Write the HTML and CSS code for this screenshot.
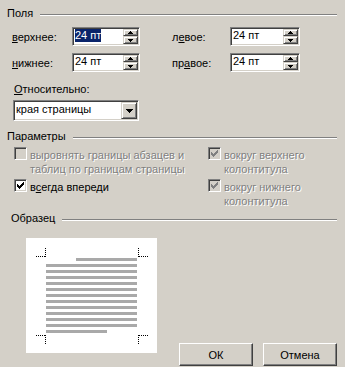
FILE: index.html
```html
<!DOCTYPE html>
<html lang="ru">
<head>
<meta charset="utf-8">
<title>Поля</title>
<link rel="stylesheet" href="styles.css">
</head>
<body>
<div class="dlg">
  <div class="head"><span class="head-t">Поля</span><span class="rule"></span></div>

  <div class="margins">
    <span class="lbl"><u>в</u>ерхнее:</span>
    <div class="spin sunken">
      <span class="val"><span class="sel">24 пт</span></span>
      <span class="spin-btns">
        <span class="sb up raised"><svg width="5" height="3" viewBox="0 0 5 3" shape-rendering="crispEdges"><path d="M2 0h1v1h-1z M1 1h3v1h-3z M0 2h5v1h-5z" fill="#000"/></svg></span>
        <span class="sb dn raised"><svg width="5" height="3" viewBox="0 0 5 3" shape-rendering="crispEdges"><path d="M0 0h5v1h-5z M1 1h3v1h-3z M2 2h1v1h-1z" fill="#000"/></svg></span>
      </span>
    </div>
    <span class="lbl lbl-r">л<u>е</u>вое:</span>
    <div class="spin sunken">
      <span class="val">24 пт</span>
      <span class="spin-btns">
        <span class="sb up raised"><svg width="5" height="3" viewBox="0 0 5 3" shape-rendering="crispEdges"><path d="M2 0h1v1h-1z M1 1h3v1h-3z M0 2h5v1h-5z" fill="#000"/></svg></span>
        <span class="sb dn raised"><svg width="5" height="3" viewBox="0 0 5 3" shape-rendering="crispEdges"><path d="M0 0h5v1h-5z M1 1h3v1h-3z M2 2h1v1h-1z" fill="#000"/></svg></span>
      </span>
    </div>

    <span class="lbl"><u>н</u>ижнее:</span>
    <div class="spin sunken">
      <span class="val">24 пт</span>
      <span class="spin-btns">
        <span class="sb up raised"><svg width="5" height="3" viewBox="0 0 5 3" shape-rendering="crispEdges"><path d="M2 0h1v1h-1z M1 1h3v1h-3z M0 2h5v1h-5z" fill="#000"/></svg></span>
        <span class="sb dn raised"><svg width="5" height="3" viewBox="0 0 5 3" shape-rendering="crispEdges"><path d="M0 0h5v1h-5z M1 1h3v1h-3z M2 2h1v1h-1z" fill="#000"/></svg></span>
      </span>
    </div>
    <span class="lbl lbl-r">пр<u>а</u>вое:</span>
    <div class="spin sunken">
      <span class="val">24 пт</span>
      <span class="spin-btns">
        <span class="sb up raised"><svg width="5" height="3" viewBox="0 0 5 3" shape-rendering="crispEdges"><path d="M2 0h1v1h-1z M1 1h3v1h-3z M0 2h5v1h-5z" fill="#000"/></svg></span>
        <span class="sb dn raised"><svg width="5" height="3" viewBox="0 0 5 3" shape-rendering="crispEdges"><path d="M0 0h5v1h-5z M1 1h3v1h-3z M2 2h1v1h-1z" fill="#000"/></svg></span>
      </span>
    </div>
  </div>

  <div class="rel"><u>О</u>тносительно:</div>
  <div class="combo sunken">
    <span class="val">края страницы</span>
    <span class="cbtn raised"><svg width="7" height="4" viewBox="0 0 7 4" shape-rendering="crispEdges"><path d="M0 0h7v1h-7z M1 1h5v1h-5z M2 2h3v1h-3z M3 3h1v1h-1z" fill="#000"/></svg></span>
  </div>

  <div class="head head-opts"><span class="head-t">Параметры</span><span class="rule"></span></div>

  <div class="opts">
    <div class="opt">
      <span class="cb dis"></span>
      <span class="opt-t dis-t">выровнять границы абзацев и<br>таблиц по границам страницы</span>
    </div>
    <div class="opt">
      <span class="cb dis"><svg width="7" height="7" viewBox="0 0 7 7" shape-rendering="crispEdges"><path d="M0 2h1v3h-1z M1 3h1v3h-1z M2 4h1v3h-1z M3 3h1v3h-1z M4 2h1v3h-1z M5 1h1v3h-1z M6 0h1v3h-1z" fill="#808080"/></svg></span>
      <span class="opt-t dis-t">вокруг верхнего<br>колонтитула</span>
    </div>
    <div class="opt">
      <span class="cb"><svg width="7" height="7" viewBox="0 0 7 7" shape-rendering="crispEdges"><path d="M0 2h1v3h-1z M1 3h1v3h-1z M2 4h1v3h-1z M3 3h1v3h-1z M4 2h1v3h-1z M5 1h1v3h-1z M6 0h1v3h-1z" fill="#000"/></svg></span>
      <span class="opt-t opt-one">в<u>с</u>егда впереди</span>
    </div>
    <div class="opt">
      <span class="cb dis"><svg width="7" height="7" viewBox="0 0 7 7" shape-rendering="crispEdges"><path d="M0 2h1v3h-1z M1 3h1v3h-1z M2 4h1v3h-1z M3 3h1v3h-1z M4 2h1v3h-1z M5 1h1v3h-1z M6 0h1v3h-1z" fill="#808080"/></svg></span>
      <span class="opt-t dis-t">вокруг нижнего<br>колонтитула</span>
    </div>
  </div>

  <div class="head head-samp"><span class="head-t">Образец</span><span class="rule"></span></div>

  <div class="bottom">
    <div class="preview">
      <svg width="131" height="115" viewBox="0 0 131 115" shape-rendering="crispEdges">
        <rect x="0" y="0" width="131" height="115" fill="#fff"/>
        <g fill="#a9a9a9">
          <rect x="50" y="20" width="61" height="3"/>
          <rect x="20" y="26" width="91" height="3"/>
          <rect x="20" y="32" width="91" height="3"/>
          <rect x="20" y="38" width="91" height="3"/>
          <rect x="20" y="44" width="91" height="3"/>
          <rect x="20" y="50" width="91" height="3"/>
          <rect x="20" y="56" width="91" height="3"/>
          <rect x="20" y="62" width="91" height="3"/>
          <rect x="20" y="68" width="91" height="3"/>
          <rect x="20" y="74" width="91" height="3"/>
          <rect x="20" y="80" width="91" height="3"/>
          <rect x="20" y="86" width="91" height="3"/>
          <rect x="20" y="92" width="61" height="3"/>
        </g>
        <g fill="#000">
          <path d="M10 18h1v1h-1z M12 18h1v1h-1z M14 18h1v1h-1z M16 18h1v1h-1z M18 18h2v1h-2z M19 16h1v1h-1z M19 14h1v1h-1z M19 12h1v1h-1z M19 10h1v1h-1z"/>
          <path d="M112 18h2v1h-2z M115 18h1v1h-1z M117 18h1v1h-1z M119 18h1v1h-1z M121 18h1v1h-1z M112 16h1v1h-1z M112 14h1v1h-1z M112 12h1v1h-1z M112 10h1v1h-1z"/>
          <path d="M10 97h1v1h-1z M12 97h1v1h-1z M14 97h1v1h-1z M16 97h1v1h-1z M18 97h2v1h-2z M19 99h1v1h-1z M19 101h1v1h-1z M19 103h1v1h-1z M19 105h1v1h-1z"/>
          <path d="M112 97h2v1h-2z M115 97h1v1h-1z M117 97h1v1h-1z M119 97h1v1h-1z M121 97h1v1h-1z M112 99h1v1h-1z M112 101h1v1h-1z M112 103h1v1h-1z M112 105h1v1h-1z"/>
        </g>
      </svg>
    </div>
    <div class="btns">
      <div class="btn">ОК</div>
      <div class="btn">Отмена</div>
    </div>
  </div>
</div>
</body>
</html>
```
FILE: styles.css
```css
* { box-sizing: border-box; }
html, body { margin: 0; padding: 0; }
body {
  width: 345px;
  height: 367px;
  overflow: hidden;
  background: #d4d0c8;
  font: 11px/14px "Liberation Sans", Tahoma, Arial, sans-serif;
  color: #000;
}
u { text-decoration: underline; text-underline-offset: 1px; }

.dlg { padding: 6px 8px 0 7px; }

.head { display: flex; height: 14px; }
.head-t { white-space: nowrap; }
.rule {
  flex: 1;
  height: 2px;
  margin: 8px 0 0 7px;
  border-top: 1px solid #808080;
  border-bottom: 1px solid #fff;
}
.head-opts { margin-top: 8px; }
.head-samp { margin-top: 3px; }
.head-samp .head-t { padding-left: 4px; }

.sunken {
  background: #fff;
  border: 1px solid;
  border-color: #808080 #fff #fff #808080;
  box-shadow: inset 1px 1px #404040, inset -1px -1px #d4d0c8;
}
.raised {
  background: #d4d0c8;
  border: 1px solid;
  border-color: #d4d0c8 #404040 #404040 #d4d0c8;
  box-shadow: inset 1px 1px #fff, inset -1px -1px #808080;
  display: flex;
  align-items: center;
  justify-content: center;
}
.raised svg { display: block; }

.margins {
  display: grid;
  grid-template-columns: 60px 68px 90px 70px;
  grid-auto-rows: 19px;
  row-gap: 7px;
  align-items: center;
  margin: 7px 0 0 5px;
}
.lbl { white-space: nowrap; }
.lbl-r { padding-left: 32px; }

.spin {
  height: 19px;
  display: flex;
  padding: 1px;
}
.val {
  flex: 1;
  padding-left: 1px;
  line-height: 13px;
  white-space: nowrap;
}
.sel { display: inline-block; background: #0a246a; color: #fff; }
.spin-btns { width: 15px; display: flex; flex-direction: column; }
.sb.up { height: 7px; }
.sb.dn { height: 8px; }

.rel { margin: 10px 0 0 7px; }
.combo {
  width: 126px;
  height: 21px;
  margin: 4px 0 0 6px;
  display: flex;
  padding: 1px;
}
.combo .val { padding: 1px 0 0 1px; }
.cbtn { width: 16px; height: 17px; flex: none; }

.opts {
  display: grid;
  grid-template-columns: 194px 1fr;
  row-gap: 3px;
  margin: 4px 0 0 7px;
}
.opt { display: flex; gap: 3px; align-items: flex-start; }
.opt-t { padding-top: 1px; white-space: nowrap; }
.opt-one { padding-top: 1px; }
.cb {
  width: 13px;
  height: 13px;
  flex: none;
  padding: 2px;
  background: #fff;
  border: 1px solid;
  border-color: #808080 #fff #fff #808080;
  box-shadow: inset 1px 1px #404040, inset -1px -1px #d4d0c8;
}
.cb svg { display: block; }
.cb.dis { background: #d4d0c8; }
.dis-t { color: #808080; text-shadow: 1px 1px 0 #fff; }

.bottom { display: flex; margin-top: 13px; }
.preview { width: 131px; height: 115px; margin-left: 19px; flex: none; }
.preview svg { display: block; }
.btns { margin: 105px 0 0 auto; display: flex; gap: 10px; }
.btn {
  width: 74px;
  height: 23px;
  display: flex;
  align-items: center;
  justify-content: center;
  border: 1px solid;
  border-color: #fff #404040 #404040 #fff;
  box-shadow: inset -1px -1px #808080;
}
```
